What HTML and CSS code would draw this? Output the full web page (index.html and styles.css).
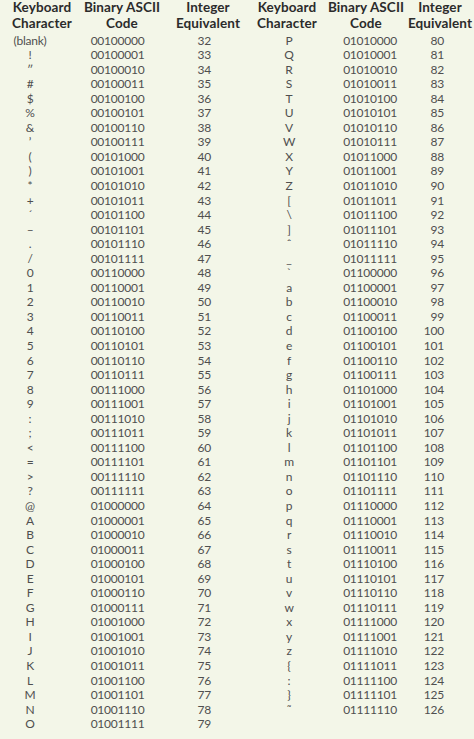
FILE: index.html
```html
<!DOCTYPE html>
<html lang="en">
<head>
<meta charset="utf-8">
<title>ASCII table</title>
<link rel="stylesheet" href="styles.css">
</head>
<body>
<div class="page">
  <div class="head">
    <div class="hcell w1">Keyboard<br>Character</div>
    <div class="hcell w2">Binary ASCII<br>Code</div>
    <div class="hcell w3">Integer<br>Equivalent</div>
    <div class="hcell w4">Keyboard<br>Character</div>
    <div class="hcell w5">Binary ASCII<br>Code</div>
    <div class="hcell w6">Integer<br>Equivalent</div>
  </div>
  <div class="body">
    <div class="half left">
      <span class="ch">(blank)</span><span class="bin">00100000</span><span class="num">32</span>
      <span class="ch">!</span><span class="bin">00100001</span><span class="num">33</span>
      <span class="ch">″</span><span class="bin">00100010</span><span class="num">34</span>
      <span class="ch">#</span><span class="bin">00100011</span><span class="num">35</span>
      <span class="ch">$</span><span class="bin">00100100</span><span class="num">36</span>
      <span class="ch">%</span><span class="bin">00100101</span><span class="num">37</span>
      <span class="ch">&amp;</span><span class="bin">00100110</span><span class="num">38</span>
      <span class="ch">’</span><span class="bin">00100111</span><span class="num">39</span>
      <span class="ch">(</span><span class="bin">00101000</span><span class="num">40</span>
      <span class="ch">)</span><span class="bin">00101001</span><span class="num">41</span>
      <span class="ch">*</span><span class="bin">00101010</span><span class="num">42</span>
      <span class="ch">+</span><span class="bin">00101011</span><span class="num">43</span>
      <span class="ch">´</span><span class="bin">00101100</span><span class="num">44</span>
      <span class="ch">–</span><span class="bin">00101101</span><span class="num">45</span>
      <span class="ch">.</span><span class="bin">00101110</span><span class="num">46</span>
      <span class="ch">/</span><span class="bin">00101111</span><span class="num">47</span>
      <span class="ch">0</span><span class="bin">00110000</span><span class="num">48</span>
      <span class="ch">1</span><span class="bin">00110001</span><span class="num">49</span>
      <span class="ch">2</span><span class="bin">00110010</span><span class="num">50</span>
      <span class="ch">3</span><span class="bin">00110011</span><span class="num">51</span>
      <span class="ch">4</span><span class="bin">00110100</span><span class="num">52</span>
      <span class="ch">5</span><span class="bin">00110101</span><span class="num">53</span>
      <span class="ch">6</span><span class="bin">00110110</span><span class="num">54</span>
      <span class="ch">7</span><span class="bin">00110111</span><span class="num">55</span>
      <span class="ch">8</span><span class="bin">00111000</span><span class="num">56</span>
      <span class="ch">9</span><span class="bin">00111001</span><span class="num">57</span>
      <span class="ch">:</span><span class="bin">00111010</span><span class="num">58</span>
      <span class="ch">;</span><span class="bin">00111011</span><span class="num">59</span>
      <span class="ch">&lt;</span><span class="bin">00111100</span><span class="num">60</span>
      <span class="ch">=</span><span class="bin">00111101</span><span class="num">61</span>
      <span class="ch">&gt;</span><span class="bin">00111110</span><span class="num">62</span>
      <span class="ch">?</span><span class="bin">00111111</span><span class="num">63</span>
      <span class="ch">@</span><span class="bin">01000000</span><span class="num">64</span>
      <span class="ch">A</span><span class="bin">01000001</span><span class="num">65</span>
      <span class="ch">B</span><span class="bin">01000010</span><span class="num">66</span>
      <span class="ch">C</span><span class="bin">01000011</span><span class="num">67</span>
      <span class="ch">D</span><span class="bin">01000100</span><span class="num">68</span>
      <span class="ch">E</span><span class="bin">01000101</span><span class="num">69</span>
      <span class="ch">F</span><span class="bin">01000110</span><span class="num">70</span>
      <span class="ch">G</span><span class="bin">01000111</span><span class="num">71</span>
      <span class="ch">H</span><span class="bin">01001000</span><span class="num">72</span>
      <span class="ch">I</span><span class="bin">01001001</span><span class="num">73</span>
      <span class="ch">J</span><span class="bin">01001010</span><span class="num">74</span>
      <span class="ch">K</span><span class="bin">01001011</span><span class="num">75</span>
      <span class="ch">L</span><span class="bin">01001100</span><span class="num">76</span>
      <span class="ch">M</span><span class="bin">01001101</span><span class="num">77</span>
      <span class="ch">N</span><span class="bin">01001110</span><span class="num">78</span>
      <span class="ch">O</span><span class="bin">01001111</span><span class="num">79</span>
    </div>
    <div class="half right">
      <span class="ch">P</span><span class="bin">01010000</span><span class="num">80</span>
      <span class="ch">Q</span><span class="bin">01010001</span><span class="num">81</span>
      <span class="ch">R</span><span class="bin">01010010</span><span class="num">82</span>
      <span class="ch">S</span><span class="bin">01010011</span><span class="num">83</span>
      <span class="ch">T</span><span class="bin">01010100</span><span class="num">84</span>
      <span class="ch">U</span><span class="bin">01010101</span><span class="num">85</span>
      <span class="ch">V</span><span class="bin">01010110</span><span class="num">86</span>
      <span class="ch">W</span><span class="bin">01010111</span><span class="num">87</span>
      <span class="ch">X</span><span class="bin">01011000</span><span class="num">88</span>
      <span class="ch">Y</span><span class="bin">01011001</span><span class="num">89</span>
      <span class="ch">Z</span><span class="bin">01011010</span><span class="num">90</span>
      <span class="ch">[</span><span class="bin">01011011</span><span class="num">91</span>
      <span class="ch">\</span><span class="bin">01011100</span><span class="num">92</span>
      <span class="ch">]</span><span class="bin">01011101</span><span class="num">93</span>
      <span class="ch">ˆ</span><span class="bin">01011110</span><span class="num">94</span>
      <span class="ch">_</span><span class="bin">01011111</span><span class="num">95</span>
      <span class="ch">`</span><span class="bin">01100000</span><span class="num">96</span>
      <span class="ch">a</span><span class="bin">01100001</span><span class="num">97</span>
      <span class="ch">b</span><span class="bin">01100010</span><span class="num">98</span>
      <span class="ch">c</span><span class="bin">01100011</span><span class="num">99</span>
      <span class="ch">d</span><span class="bin">01100100</span><span class="num">100</span>
      <span class="ch">e</span><span class="bin">01100101</span><span class="num">101</span>
      <span class="ch">f</span><span class="bin">01100110</span><span class="num">102</span>
      <span class="ch">g</span><span class="bin">01100111</span><span class="num">103</span>
      <span class="ch">h</span><span class="bin">01101000</span><span class="num">104</span>
      <span class="ch">i</span><span class="bin">01101001</span><span class="num">105</span>
      <span class="ch">j</span><span class="bin">01101010</span><span class="num">106</span>
      <span class="ch">k</span><span class="bin">01101011</span><span class="num">107</span>
      <span class="ch">l</span><span class="bin">01101100</span><span class="num">108</span>
      <span class="ch">m</span><span class="bin">01101101</span><span class="num">109</span>
      <span class="ch">n</span><span class="bin">01101110</span><span class="num">110</span>
      <span class="ch">o</span><span class="bin">01101111</span><span class="num">111</span>
      <span class="ch">p</span><span class="bin">01110000</span><span class="num">112</span>
      <span class="ch">q</span><span class="bin">01110001</span><span class="num">113</span>
      <span class="ch">r</span><span class="bin">01110010</span><span class="num">114</span>
      <span class="ch">s</span><span class="bin">01110011</span><span class="num">115</span>
      <span class="ch">t</span><span class="bin">01110100</span><span class="num">116</span>
      <span class="ch">u</span><span class="bin">01110101</span><span class="num">117</span>
      <span class="ch">v</span><span class="bin">01110110</span><span class="num">118</span>
      <span class="ch">w</span><span class="bin">01110111</span><span class="num">119</span>
      <span class="ch">x</span><span class="bin">01111000</span><span class="num">120</span>
      <span class="ch">y</span><span class="bin">01111001</span><span class="num">121</span>
      <span class="ch">z</span><span class="bin">01111010</span><span class="num">122</span>
      <span class="ch">{</span><span class="bin">01111011</span><span class="num">123</span>
      <span class="ch">:</span><span class="bin">01111100</span><span class="num">124</span>
      <span class="ch">}</span><span class="bin">01111101</span><span class="num">125</span>
      <span class="ch">˜</span><span class="bin">01111110</span><span class="num">126</span>
    </div>
  </div>
</div>
</body>
</html>
```
FILE: styles.css
```css
html, body {
  margin: 0;
  padding: 0;
  background: #f3f6e8;
}
body {
  width: 474px;
  height: 739px;
  overflow: hidden;
  font-family: "Lato", "Open Sans", "DejaVu Sans", sans-serif;
}
.page {
  display: flex;
  flex-direction: column;
}
.head {
  display: flex;
  color: #2b2b2b;
  font-weight: 700;
  font-size: 13.5px;
  line-height: 15.5px;
  letter-spacing: 0.1px;
}
.hcell {
  display: flex;
  flex-direction: column;
  align-items: center;
  text-align: center;
  white-space: nowrap;
}
.w1 { width: 84px; }
.w2 { width: 76px; }
.w3 { width: 96px; }
.w4 { width: 62px; }
.w5 { width: 96px; }
.w6 { width: 52px; }
.body {
  display: flex;
  margin-top: 2.5px;
  color: #4f4f4f;
  font-size: 12px;
  line-height: 14.55px;
  letter-spacing: -0.25px;
}
.half {
  display: grid;
  grid-auto-rows: 14.55px;
}
.left {
  grid-template-columns: 60px 115px 36px;
}
.right {
  margin-left: 48px;
  grid-template-columns: 60px 102px 23px;
}
.ch {
  text-align: center;
  white-space: nowrap;
}
.bin {
  text-align: center;
}
.num {
  text-align: right;
}
```
